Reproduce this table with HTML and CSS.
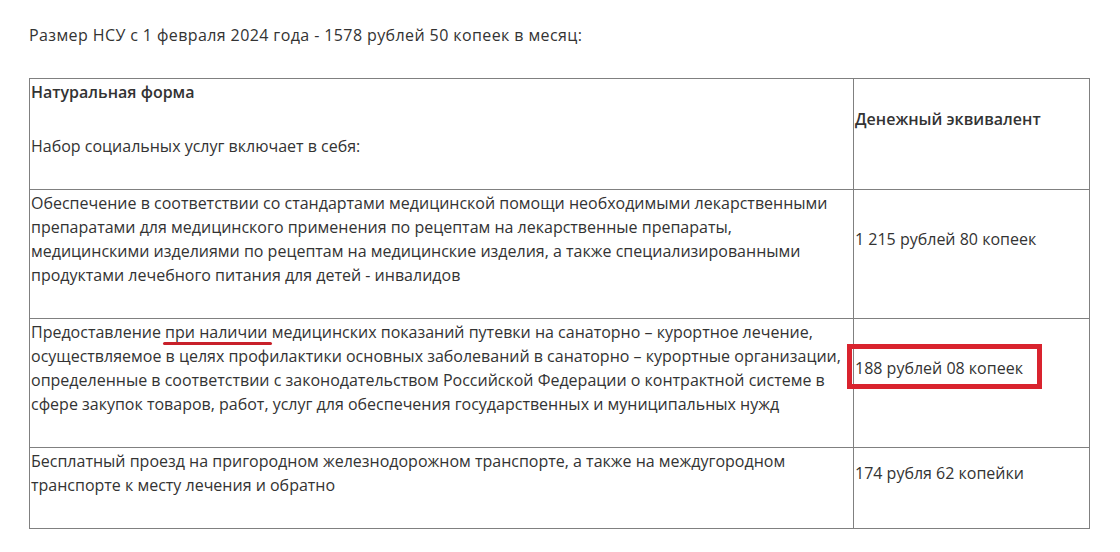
FILE: index.html
```html
<!DOCTYPE html>
<html lang="ru">
<head>
<meta charset="utf-8">
<link rel="stylesheet" href="styles.css">
</head>
<body>
<div class="article">
  <p class="intro">Размер НСУ с 1 февраля 2024 года - 1578 рублей 50 копеек в месяц:</p>
  <table class="nsu">
    <tr>
      <td class="col-main">
        <p><strong>Натуральная форма</strong></p>
        <p>Набор социальных услуг включает в себя:</p>
      </td>
      <td class="col-money">
        <p><strong>Денежный эквивалент</strong></p>
      </td>
    </tr>
    <tr>
      <td class="col-main"><p>Обеспечение в соответствии со стандартами медицинской помощи необходимыми лекарственными препаратами для медицинского применения по рецептам на лекарственные препараты, медицинскими изделиями по рецептам на медицинские изделия, а также специализированными продуктами лечебного питания для детей - инвалидов</p></td>
      <td class="col-money"><p>1 215 рублей 80 копеек</p></td>
    </tr>
    <tr>
      <td class="col-main"><p>Предоставление <span class="mark-under">при наличии</span> медицинских показаний путевки на санаторно – курортное лечение, осуществляемое в целях профилактики основных заболеваний в санаторно – курортные организации, определенные в соответствии с законодательством Российской Федерации о контрактной системе в сфере закупок товаров, работ, услуг для обеспечения государственных и муниципальных нужд</p></td>
      <td class="col-money"><p><span class="mark-box">188 рублей 08 копеек</span></p></td>
    </tr>
    <tr>
      <td class="col-main"><p>Бесплатный проезд на пригородном железнодорожном транспорте, а также на междугородном транспорте к месту лечения и обратно</p></td>
      <td class="col-money"><p>174 рубля 62 копейки</p></td>
    </tr>
  </table>
</div>
</body>
</html>
```

FILE: styles.css
```css
html, body {
  margin: 0;
  padding: 0;
  background: #ffffff;
}
body {
  font-family: "Open Sans", "Liberation Sans", sans-serif;
  font-size: 16px;
  line-height: 24px;
  color: #333333;
}
.article {
  padding: 23px 0 0 29px;
  width: 1061px;
}
.intro {
  margin: 0 0 31px 0;
  letter-spacing: 0.4px;
}
.nsu {
  border-collapse: collapse;
  width: 1061px;
}
.nsu td {
  border: 1px solid #808080;
  padding: 1px 1px 1px 1px;
  vertical-align: middle;
}
.nsu p {
  margin: 0 0 30px 0;
}
.nsu strong {
  font-weight: 600;
}
.col-main {
  width: 821px;
}
.mark-under {
  position: relative;
}
.mark-under::after {
  content: "";
  position: absolute;
  left: -2px;
  right: -4px;
  bottom: -2px;
  height: 3px;
  border-radius: 2px;
  background: #c8202a;
}
.mark-box {
  position: relative;
}
.mark-box::after {
  content: "";
  position: absolute;
  left: -8px;
  top: -13px;
  width: 185px;
  height: 35px;
  border: 5px solid #d9232e;
}
```
